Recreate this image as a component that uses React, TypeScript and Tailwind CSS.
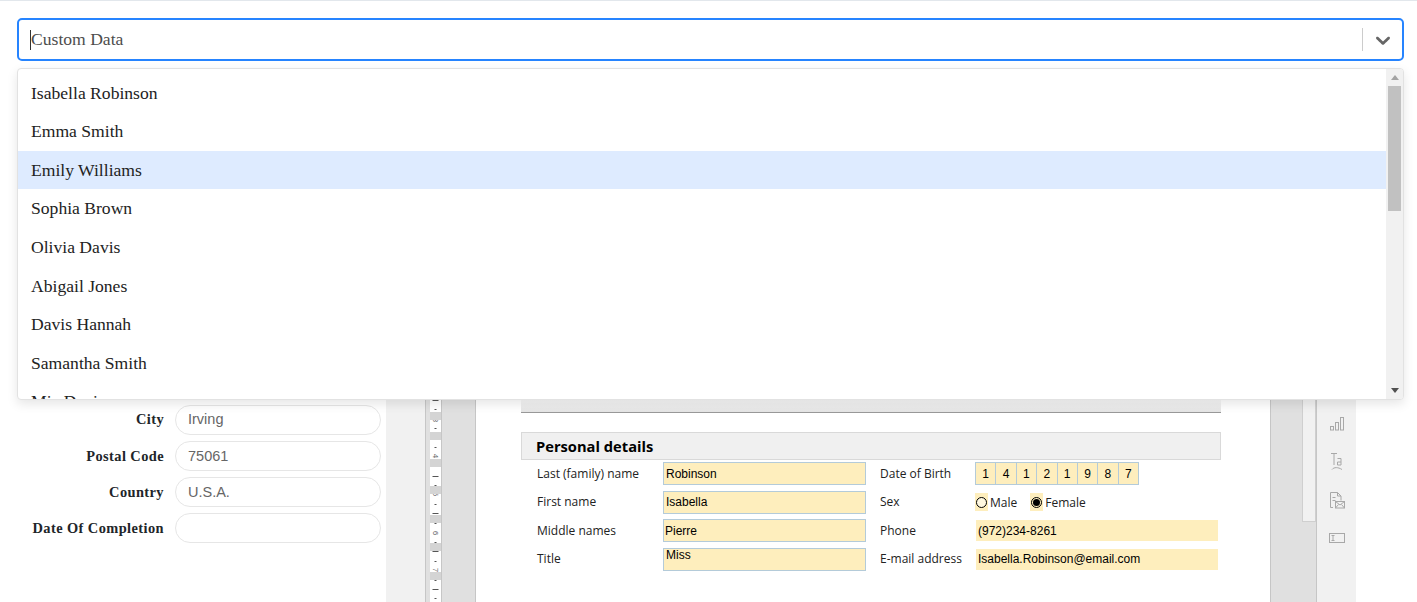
const serif = "font-['Liberation_Serif',serif]";
const names = ["Isabella Robinson", "Emma Smith", "Emily Williams", "Sophia Brown", "Olivia Davis", "Abigail Jones", "Davis Hannah", "Samantha Smith", "Mia Davis"];

function FormRow({ label, value, nudge = "pt-px" }: { label: string; value: string; nudge?: string }) {
  return (
    <div className="flex items-center h-[30px]">
      <div className={`w-[164px] text-right text-[14.4px] font-bold text-[#212529] tracking-[0.42px] ${nudge} ${serif}`}>{label}</div>
      <div className={`ml-[11px] w-[206px] h-[30px] rounded-[15px] border border-[#e6e6e6] bg-white pl-[12px] flex items-center text-[14.5px] text-[#666] font-['Liberation_Sans',sans-serif] ${nudge}`}>{value}</div>
    </div>
  );
}

function Ruler() {
  const bands = [[412, 420], [432, 440], [459, 467], [486, 494], [515, 523], [543, 551], [572, 580]];
  const ticks: [number, number][] = [[400, 6], [409, 2], [428, 2], [447, 2], [476, 6], [485, 2], [504, 2], [513, 6], [523, 2], [542, 2], [551, 6], [561, 2], [580, 2], [589, 6], [598, 2]];
  const nums: [string, number][] = [["3", 420], ["4", 456], ["5", 494], ["6", 533], ["7", 570]];
  return (
    <svg width="12" height="203" viewBox="430 399 12 203" className="block">
      <rect x="430" y="399" width="11" height="203" fill="#ffffff" />
      <rect x="441" y="399" width="1" height="203" fill="#c6c6c6" />
      {ticks.map(([y, w]) => <rect key={y} x={435.500 - w / 2} y={y} width={w} height="1" fill="#555" />)}
      {nums.map(([n, y]) => (
        <text key={n} x="0" y="0" fontSize="8" fill="#666" fontFamily="Liberation Sans" textAnchor="middle" transform={`translate(433 ${y}) rotate(90)`}>{n}</text>
      ))}
      {bands.map(([a, b]) => <rect key={a} x="430" y={a} width="11" height={b - a} fill="#d4d4d4" />)}
    </svg>
  );
}

function Field({ w, children, className = "" }: { w: string; children?: React.ReactNode; className?: string }) {
  return <div className={`${w} bg-[#feeebd] text-[12px] text-black font-['Liberation_Sans',sans-serif] leading-none ${className}`}>{children}</div>;
}

function DocRow({ label, value, valueClass, right, rightChild, labelClass = "" }: { label: string; value: string; valueClass?: string; right: string; rightChild: React.ReactNode; labelClass?: string }) {
  return (
    <div className="flex h-[23px] text-[12px] text-[#222] font-['Open_Sans',sans-serif] leading-none">
      <div className={`w-[142px] pl-[16px] flex items-center ${labelClass}`}>{label}</div>
      <Field w="w-[203px]" className={`border border-[#b4cbd9] flex ${valueClass ?? "items-center pl-[2px]"}`}>{value}</Field>
      <div className={`w-[109px] pl-[14px] flex items-center ${labelClass}`}>{right}</div>
      {rightChild}
    </div>
  );
}

function Icons() {
  const c = "#a8a8a8";
  return (
    <div className="flex flex-col items-center">
      <svg width="16" height="15" viewBox="0 0 16 15" fill="none" stroke={c} className="mt-[17px]">
        <rect x="1.500" y="10.500" width="3" height="3.500" /><rect x="6.500" y="6.500" width="3" height="7.500" /><rect x="11.500" y="1.500" width="3" height="12.500" />
      </svg>
      <svg width="16" height="18" viewBox="0 0 16 18" fill="none" stroke={c} className="mt-[21px]">
        <path d="M2 1.500h6M5 1.500V13" />
        <path d="M8.500 6.500h3.500v6.500h-3.500v-3h3.500" />
        <path d="M3 17.500c2-2.500 6-2.500 10 0" />
      </svg>
      <svg width="16" height="17" viewBox="0 0 16 17" fill="none" stroke={c} className="mt-[22px]">
        <path d="M4 15.500H1.500V0.500h7l3.500 3.500v4.500M8.500 0.500v3.500h3.500M3.500 5.500h3M3.500 8.500h3" />
        <rect x="6.500" y="9.500" width="9" height="6.500" /><path d="M6.500 9.500l4.500 3.500 4.500-3.500M6.500 16l3-3.500M15.500 16l-3-3.500" />
      </svg>
      <svg width="16" height="10" viewBox="0 0 16 10" fill="none" stroke={c} className="mt-[24px]">
        <rect x="0.500" y="0.500" width="15" height="9" /><path d="M2.500 2.500h3M2.500 7.500h3M4 2.500v5" />
      </svg>
    </div>
  );
}

export default function App() {
  return (
    <div className="relative h-[602px] overflow-hidden bg-white border-t border-[#e2e7ec]">
      <div className="pt-[17px] pl-[17px] pr-[13px]">
        <div className="h-[43px] rounded-[5px] border-2 border-[#2684ff] bg-white flex items-center pl-[11px]">
          <div className="w-px h-[20px] bg-[#333]" />
          <div className={`flex-1 text-[17.600px] text-[#4d4d4d] ${serif}`}>Custom Data</div>
          <div className="w-px h-[23px] bg-[#ccc]" />
          <svg width="24" height="24" viewBox="0 0 20 20" className="ml-[8px] mr-[7px]" fill="#666">
            <path d="M4.516 7.548c0.436-0.446 1.043-0.481 1.576 0l3.908 3.747 3.908-3.747c0.533-0.481 1.141-0.446 1.574 0 0.436 0.445 0.408 1.197 0 1.615-0.406 0.418-4.695 4.502-4.695 4.502-0.217 0.223-0.502 0.335-0.787 0.335s-0.570-0.112-0.789-0.335c0 0-4.287-4.084-4.695-4.502s-0.436-1.170 0-1.615z" />
          </svg>
        </div>
      </div>

      <div className="absolute left-[17px] top-[67px] w-[1387px] h-[332px] z-10 bg-white rounded-[4px] border border-[#e2e2e2] shadow-[0_4px_11px_rgba(0,0,0,0.1)] overflow-hidden flex">
        <div className={`flex-1 overflow-hidden pt-[4.500px] text-[17.600px] text-[#222] ${serif}`}>
          {names.map((n) => (
            <div key={n} className={`h-[38.600px] flex items-center pl-[13px] ${n === "Emily Williams" ? "bg-[#deebff]" : ""}`}>{n}</div>
          ))}
        </div>
        <div className="w-[17px] bg-[#f1f1f1] flex flex-col items-center">
          <div className="h-[17px] flex items-center justify-center">
            <svg width="8" height="5" viewBox="0 0 8 5"><path d="M4 0l4 5H0z" fill="#a3a3a3" /></svg>
          </div>
          <div className="w-[13px] h-[125px] bg-[#c1c1c1]" />
          <div className="flex-1" />
          <div className="h-[17px] flex items-center justify-center">
            <svg width="8" height="5" viewBox="0 0 8 5"><path d="M0 0h8L4 5z" fill="#505050" /></svg>
          </div>
        </div>
      </div>

      <div className="absolute left-0 right-0 top-[398px] bottom-0 flex">
        <div className="w-[386px] pt-[6px] flex flex-col gap-[6px] shrink-0">
          <FormRow label="City" value="Irving" nudge="" />
          <FormRow label="Postal Code" value="75061" />
          <FormRow label="Country" value="U.S.A." />
          <FormRow label="Date Of Completion" value="" />
        </div>
        <div className="w-[970px] bg-[#f1f1f1] flex">
          <div className="w-[39px]" />
          <div className="w-[5px] border-l border-[#c6c6c6] bg-[#e0e0e0]" />
          <Ruler />
          <div className="w-[33px] bg-[#e0e0e0]" />
          <div className="w-[796px] border-x border-[#c6c6c6] bg-white pl-[45px]">
            <div className="w-[700px] h-[14px] bg-gradient-to-b from-[#fafafa] to-[#e4e4e4] border-b border-[#999]" />
            <div className="w-[700px] h-[28px] mt-[19px] pt-px bg-[#f0f0f0] border border-[#d9d9d9] pl-[14px] flex items-center text-[14.700px] font-bold text-black font-['Open_Sans',sans-serif]">Personal details</div>
            <div className="mt-[2px] flex flex-col gap-[5.600px] w-[700px]">
              <DocRow label="Last (family) name" value="Robinson" right="Date of Birth" rightChild={
                <div className="w-[164px] flex border border-[#b4cbd9] bg-[#feeebd] text-[12px] text-black font-['Liberation_Sans',sans-serif]">
                  {"14121987".split("").map((d, i) => (
                    <div key={i} className={`flex-1 flex items-center justify-center ${i ? "border-l border-[#b4cbd9]" : ""}`}>{d}</div>
                  ))}
                </div>
              } />
              <DocRow label="First name" value="Isabella" right="Sex" labelClass="pb-px" rightChild={
                <div className="flex items-center text-[12px] text-[#222]">
                  <div className="w-[13px] h-[18px] bg-[#feeebd] flex items-center justify-center"><div className="w-[11px] h-[11px] rounded-full border border-black bg-[#fff8e0]" /></div>
                  <span className="ml-[2px] mt-[2px]">Male</span>
                  <div className="ml-[13px] w-[13px] h-[18px] bg-[#feeebd] flex items-center justify-center"><div className="w-[11px] h-[11px] rounded-full border border-black flex items-center justify-center"><div className="w-[7px] h-[7px] rounded-full bg-black" /></div></div>
                  <span className="ml-[2px] mt-[2px]">Female</span>
                </div>
              } />
              <DocRow label="Middle names" value="Pierre" valueClass="items-center pl-[1px]" right="Phone" rightChild={
                <Field w="w-[242px]" className="flex items-center pl-[2px] my-[1px] ml-px">(972)234-8261</Field>
              } />
              <DocRow label="Title" value="Miss" valueClass="items-start pl-[2px]" right="E-mail address" labelClass="pb-px" rightChild={
                <Field w="w-[242px]" className="flex items-center pl-[2px] my-[1px] ml-px">Isabella.Robinson@email.com</Field>
              } />
            </div>
          </div>
          <div className="w-[46px] bg-[#e0e0e0] border-r border-[#c6c6c6] pl-[31px]">
            <div className="w-[14px] h-[123px] bg-[#f1f1f1] border-x border-b border-[#cfcfcf]" />
          </div>
          <div className="flex-1"><Icons /></div>
        </div>
      </div>
    </div>
  );
}
